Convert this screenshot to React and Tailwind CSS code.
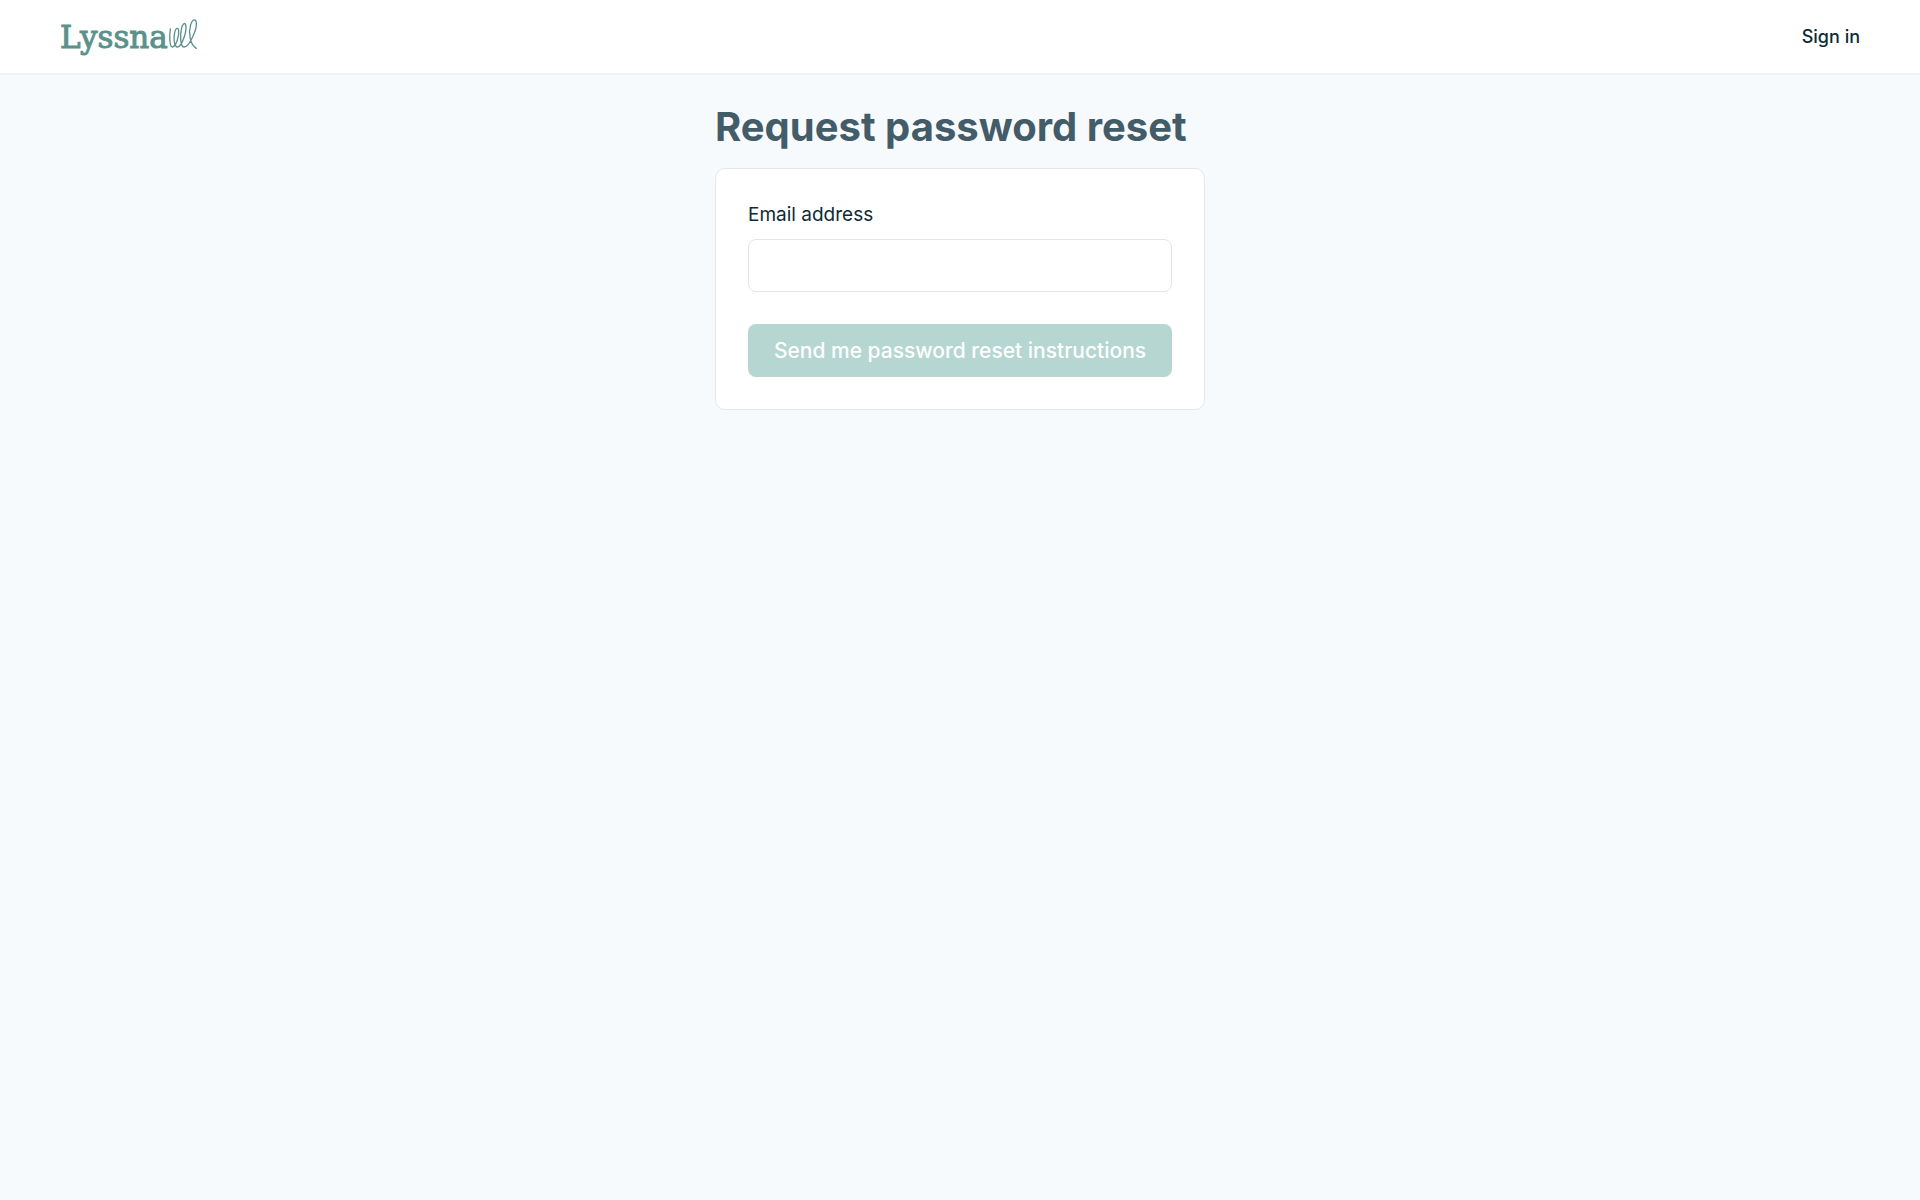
function Scribble() {
  return (
    <svg
      className="mb-1.5 h-8 w-[30px] shrink-0"
      viewBox="0 0 90 96"
      fill="none"
      stroke="currentColor"
      strokeWidth="4"
      strokeLinecap="round"
      aria-hidden="true"
    >
      <path d="M7 33C4 50 4 86 13 87C24 87 34 54 32 38C31 27 23 29 20 43C16 60 18 87 29 87C41 87 55 44 54 26C53 12 45 14 41 29C36 50 36 86 48 87C64 88 87 34 85 15C84 1 74 2 68 20C61 43 65 79 85 91" />
    </svg>
  );
}

export default function App() {
  return (
    <div className="min-h-screen bg-[#f6fafd] font-['Inter',sans-serif] text-[#0d2b35]">
      <header className="flex h-[75px] items-center justify-between border-b-2 border-[#edf2f5] bg-white px-[60px]">
        <a href="#home" aria-label="Lyssna" className="flex items-center text-[#5b918b]">
          <span className="font-['DejaVu_Serif',serif] text-[31px] leading-8 [-webkit-text-stroke:1px_currentColor]">
            Lyssna
          </span>
          <Scribble />
        </a>
        <a href="#sign-in" className="text-lg font-medium">
          Sign in
        </a>
      </header>
      <main className="mx-auto w-full max-w-[490px] pt-7">
        <h1 className="text-[40px] leading-12 font-bold whitespace-nowrap text-[#445c68]">
          Request password reset
        </h1>
        <form className="mt-[17px] rounded-[10px] border border-[#e2e8ec] bg-white p-8">
          <label htmlFor="email" className="block text-[19px] leading-7">
            Email address
          </label>
          <input
            id="email"
            type="email"
            className="mt-2.5 block h-[53px] w-full rounded-lg border border-[#e0e6ea] bg-white px-4 text-lg outline-none"
          />
          <button
            type="button"
            className="mt-8 block h-[53px] w-full rounded-lg bg-[#b5d6d1] text-[21px] font-medium whitespace-nowrap text-white"
          >
            Send me password reset instructions
          </button>
        </form>
      </main>
    </div>
  );
}
